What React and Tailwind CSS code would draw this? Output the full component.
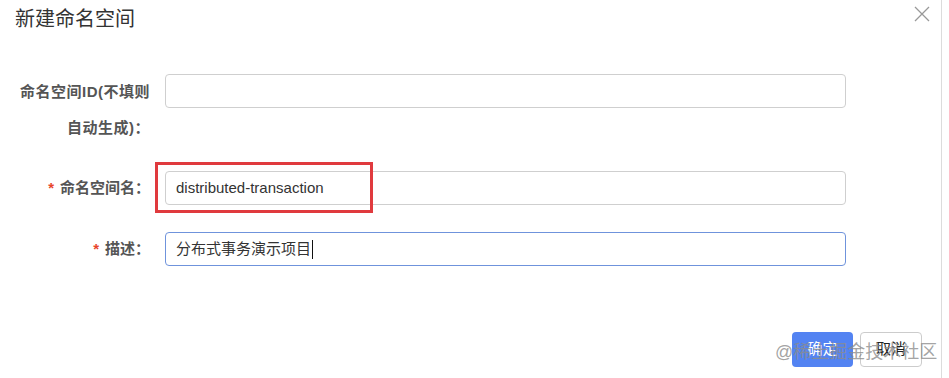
export default function App() {
  return (
    <div className="relative h-[378px] w-[949px] overflow-hidden bg-white font-['Liberation_Sans','Noto_Sans_CJK_SC',sans-serif] text-[#333]">
      <div className="h-full w-[942px] border-r border-[#dcdcdc]">
        <div className="flex items-start justify-between">
          <h1 className="pl-[15px] pt-[5px] text-[20px] leading-[28px] text-[#333]">新建命名空间</h1>
          <button className="mr-[10px] mt-[5px] flex h-[18px] w-[18px] items-center justify-center text-[#999]">
            <svg width="16" height="16" viewBox="0 0 16 16" fill="none" stroke="currentColor" strokeWidth="1.3">
              <path d="M1 1 L15 15 M15 1 L1 15" />
            </svg>
          </button>
        </div>

        <div className="mt-[41px]">
          <div className="flex items-start">
            <label className="w-[150px] text-right text-[15px] font-bold leading-[36px] tracking-[0.5px] text-[#555]">
              命名空间ID(不填则
              <br />
              自动生成)：
            </label>
            <div className="ml-[15px] h-[34px] w-[681px] rounded-[4px] border border-[#cfcfcf]" />
          </div>

          <div className="mt-[25px] flex items-center">
            <label className="w-[150px] text-right text-[15px] font-bold text-[#555]">
              <span className="mr-[6px] text-[#e8452c]">*</span>命名空间名：
            </label>
            <div className="relative ml-[15px]">
              <div className="flex h-[34px] w-[681px] items-center rounded-[4px] border border-[#cfcfcf] px-[10px] text-[15px] text-[#333]">
                distributed-transaction
              </div>
              <div className="absolute left-[-10px] top-[-9px] h-[51px] w-[218px] border-[3px] border-[#e03a3e]" />
            </div>
          </div>

          <div className="mt-[27px] flex items-center">
            <label className="w-[150px] text-right text-[15px] font-bold text-[#555]">
              <span className="mr-[6px] text-[#e8452c]">*</span>描述：
            </label>
            <div className="ml-[15px] flex h-[34px] w-[681px] items-center rounded-[4px] border border-[#6f93dc] px-[10px] text-[15px] text-[#333]">
              分布式事务演示项目
              <span className="ml-px inline-block h-[19px] w-px bg-[#111]" />
            </div>
          </div>
        </div>

        <div className="mt-[66px] flex justify-end gap-[7px] pr-[19px]">
          <button className="h-[35px] w-[61px] rounded-[4px] bg-[#5383f2] text-[15px] text-white">确定</button>
          <button className="h-[35px] w-[62px] rounded-[4px] border border-[#ccc] bg-white text-[15px] text-[#222]">取消</button>
        </div>
      </div>

      <div className="pointer-events-none absolute left-[775px] top-[340px] text-[18px] leading-[24px] text-[#8c8c8c]/80">
        @稀土掘金技术社区
      </div>
    </div>
  );
}
